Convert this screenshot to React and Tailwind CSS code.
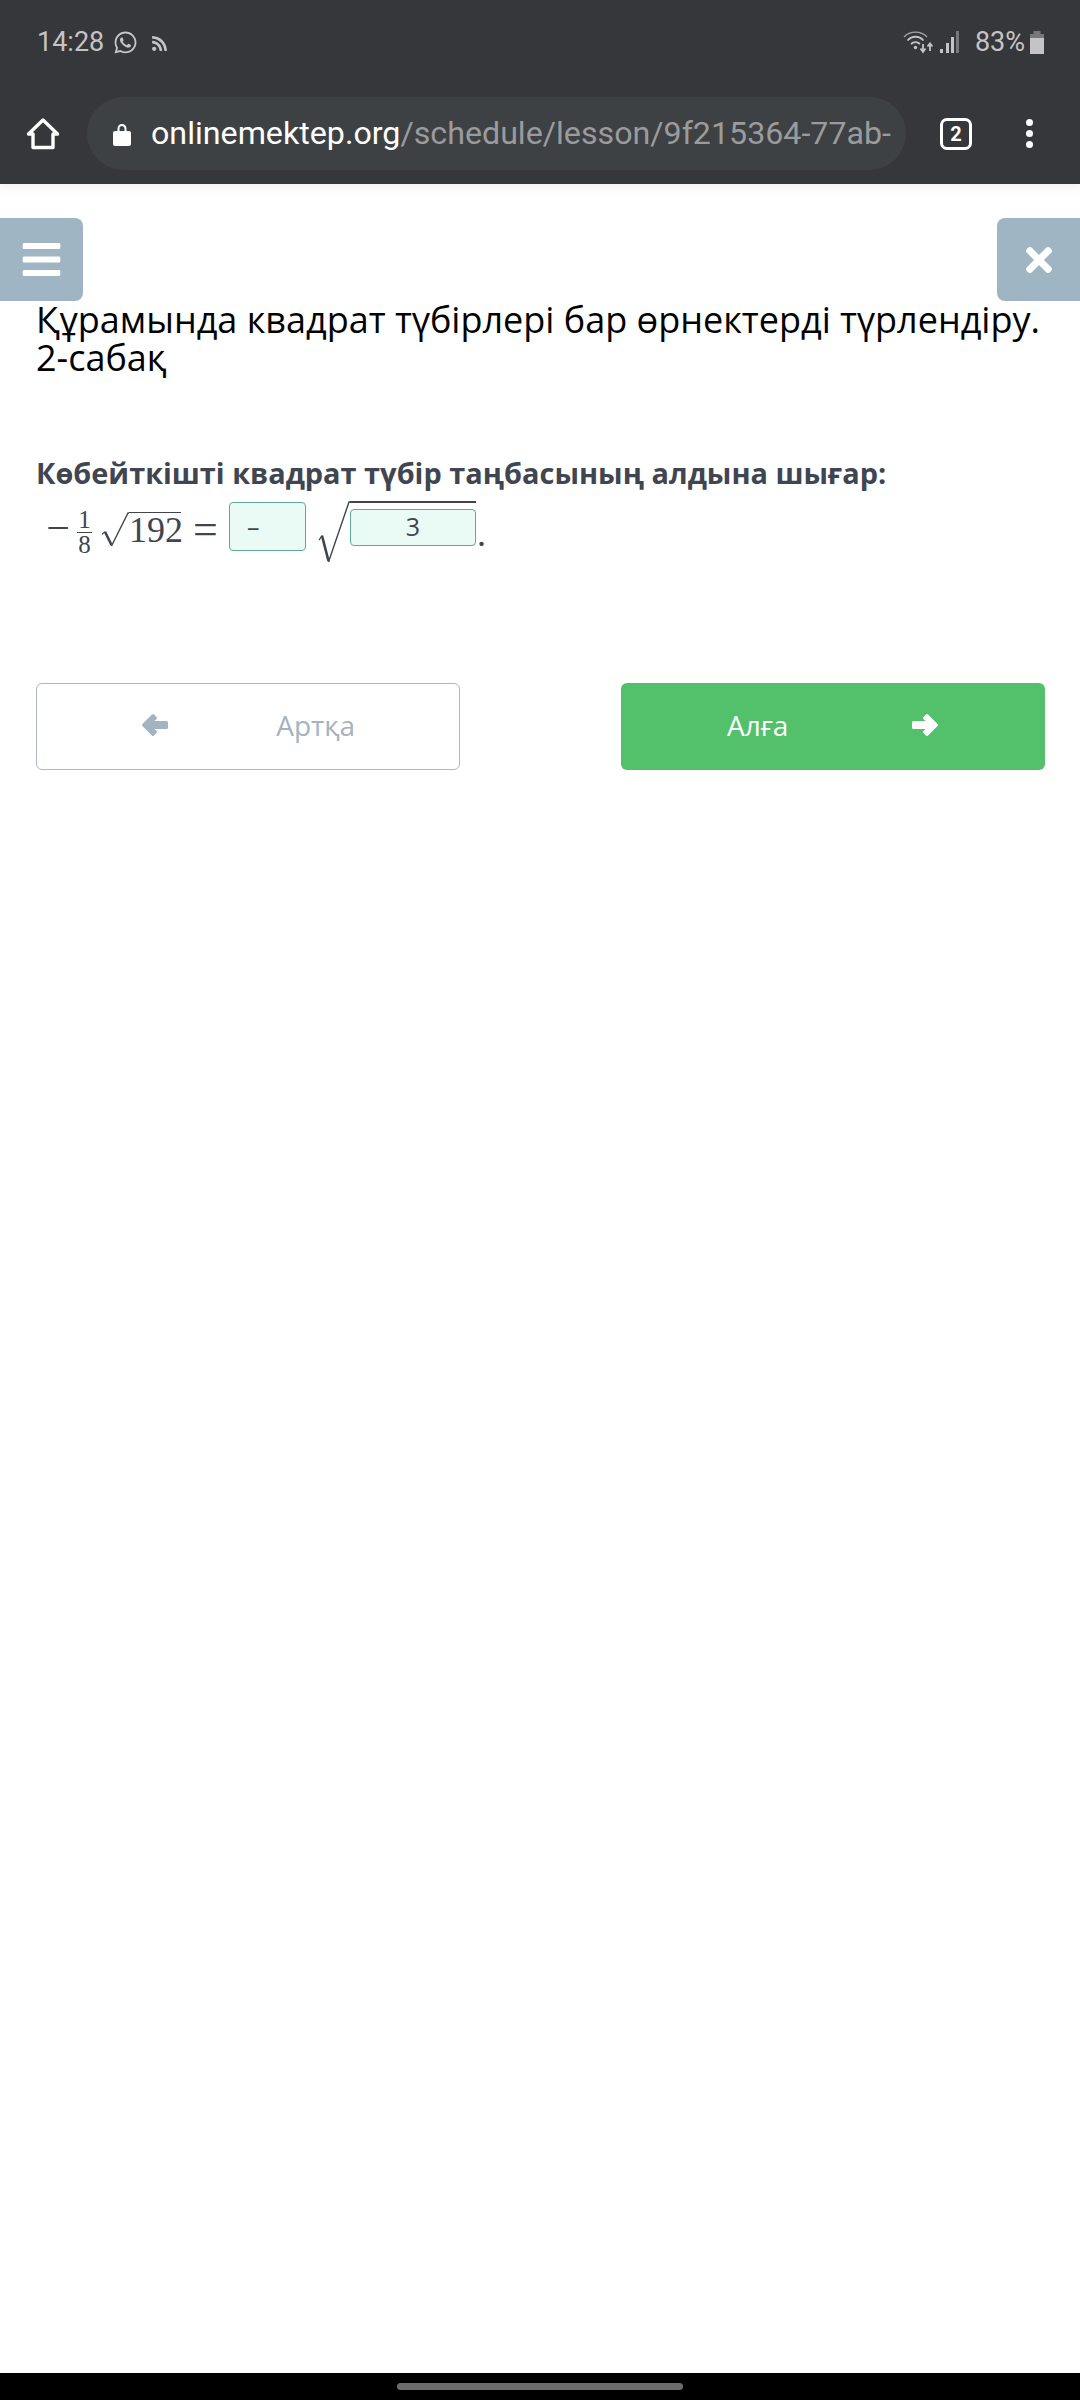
import React from 'react';
import { FaBars, FaTimes, FaWhatsapp, FaRss } from 'react-icons/fa';

const HomeIcon = () => (
    <svg width="34" height="34" viewBox="0 0 34 34" fill="none" stroke="white" strokeWidth="3.4" strokeLinejoin="round">
        <path d="M2.5 17 L17 3 L31.5 17 H27 V30.5 H7 V17 Z" />
    </svg>
);

const LockIcon = () => (
    <svg width="18" height="24" viewBox="0 0 18 24" fill="white">
        <path d="M4.5 9 V6.5 a4.5 4.5 0 0 1 9 0 V9 h-2 V6.5 a2.5 2.5 0 0 0 -5 0 V9 Z" />
        <rect x="0" y="9" width="18" height="15" rx="2" />
    </svg>
);

const WifiIcon = () => (
    <svg width="30" height="24" viewBox="0 0 30 24" fill="none" stroke="#c4c4c6" strokeWidth="1.8">
        <path d="M1 7 C7 0.5 18 0.5 24 7" strokeWidth="1.3" stroke="#a5a5a7" />
        <path d="M4.5 10.5 C9 5.5 16 5.5 20.5 10.5" />
        <path d="M8 14 C10.5 11.5 14.5 11.5 17 14" />
        <circle cx="12.5" cy="17.5" r="1.7" fill="#c4c4c6" stroke="none" />
        <path d="M20 14 V21 M17.5 18.5 L20 22 L22.5 18.5" />
        <path d="M27 21 V14 M24.5 16.5 L27 13.5 L29.5 16.5" />
    </svg>
);

const SignalIcon = () => (
    <svg width="20" height="22" viewBox="0 0 20 22" fill="#c4c4c6">
        <rect x="0" y="18" width="3" height="4" />
        <rect x="6" y="12" width="3" height="10" />
        <rect x="11" y="6" width="3" height="16" />
        <rect x="16" y="0" width="3" height="22" fill="#77787b" />
    </svg>
);

const BatteryIcon = () => (
    <svg width="14" height="23" viewBox="0 0 14 23" fill="#c4c4c6">
        <rect x="3.5" y="0" width="7" height="3" fill="#77787b" />
        <rect x="0" y="3" width="14" height="4" fill="#77787b" />
        <rect x="0" y="7" width="14" height="16" />
    </svg>
);

// chunky arrow, points left unless flipped
const ChunkyArrow = ({ className }) => (
    <svg width="28" height="26" viewBox="0 0 28 26" fill="currentColor" stroke="currentColor" strokeWidth="3" strokeLinejoin="round" className={className}>
        <path d="M2.5 13 L12 3.5 L14.5 6 L9 10.5 H25.5 V15.5 H9 L14.5 20 L12 22.5 Z" />
    </svg>
);

const Radical = ({ width, height, className }) => (
    <svg width={width} height={height} viewBox={`0 0 ${width} ${height}`} fill="none" stroke="#3f4652" className={`shrink-0 ${className || ''}`}>
        <path d={`M1 ${height * 0.62} L4 ${height * 0.55}`} strokeWidth="1.2" />
        <path d={`M4 ${height * 0.55} L10.5 ${height - 3}`} strokeWidth="2.6" />
        <path d={`M10.5 ${height - 2} L${width - 1} 1 H${width}`} strokeWidth="1.4" />
    </svg>
);

const AnswerBox = ({ className, children }) => (
    <div className={`flex items-center border border-[#5fa99a] bg-[#eafaf5] rounded-[4px] text-[#3f4652] text-[25px] leading-none font-['Open_Sans',sans-serif] ${className}`}>
        {children}
    </div>
);

const App = () => {
    return (
        <div className="relative w-[1080px] h-[2400px] bg-white overflow-hidden flex flex-col font-['Open_Sans',sans-serif]">
            {/* Status bar */}
            <div className="bg-[#36373b] h-[184px] shrink-0 shadow-[0_4px_10px_rgba(0,0,0,0.06)] flex flex-col font-['Roboto',sans-serif]">
                <div className="h-[97px] flex justify-between pl-[37px] pr-[36px] pt-[24px] text-[#c4c4c6] text-[27px] leading-[36px]">
                    <div className="flex items-center h-[36px]">
                        <span>14:28</span>
                        <FaWhatsapp className="ml-[9px] text-[25px]" />
                        <FaRss className="ml-[13px] text-[17px] mt-[3px]" />
                    </div>
                    <div className="flex items-center h-[36px]">
                        <WifiIcon />
                        <div className="ml-[7px]"><SignalIcon /></div>
                        <span className="ml-[15px]">83%</span>
                        <div className="ml-[5px]"><BatteryIcon /></div>
                    </div>
                </div>
                <div className="flex items-center h-[73px]">
                    <div className="w-[87px] pr-[2px] flex justify-center shrink-0"><HomeIcon /></div>
                    <div className="w-[819px] h-[73px] rounded-full bg-[#3e4144] flex items-center pl-[26px] overflow-hidden shrink-0">
                        <LockIcon />
                        <span className="ml-[20px] text-[32.2px] leading-none whitespace-nowrap text-white">
                            onlinemektep.org<span className="text-[#9a9b9d]">/schedule/lesson/9f215364-77ab-</span>
                        </span>
                    </div>
                    <div className="ml-[34px] w-[32px] h-[32px] border-[3px] border-white rounded-[7px] flex items-center justify-center text-white text-[20px] font-bold leading-none shrink-0">2</div>
                    <div className="ml-[54px] flex flex-col gap-[4px] shrink-0">
                        <span className="w-[7px] h-[7px] rounded-full bg-white"></span>
                        <span className="w-[7px] h-[7px] rounded-full bg-white"></span>
                        <span className="w-[7px] h-[7px] rounded-full bg-white"></span>
                    </div>
                </div>
            </div>

            {/* Overlay side buttons */}
            <button className="absolute left-0 top-[218px] w-[83px] h-[83px] bg-[#9fb5c3] rounded-r-[8px] flex items-center justify-center text-white text-[43px]">
                <FaBars />
            </button>
            <button className="absolute right-0 top-[218px] w-[83px] h-[83px] bg-[#9fb5c3] rounded-l-[8px] flex items-center justify-center text-white text-[38px]">
                <FaTimes />
            </button>

            {/* Lesson */}
            <div className="flex-1 pl-[36px] pr-[35px] pt-[117px]">
                <h1 className="text-[36px] leading-[38px] text-black font-normal">
                    Құрамында квадрат түбірлері бар өрнектерді түрлендіру. 2-сабақ
                </h1>

                <p className="mt-[77px] text-[28.9px] leading-[38px] font-bold text-[#3f4652]">
                    Көбейткішті квадрат түбір таңбасының алдына шығар:
                </p>

                <div className="flex items-center h-[72px] pl-[10px] font-['Liberation_Serif',serif] text-[#3f4652] text-[36px] leading-none">
                    <span className="w-[24px] text-[42px] text-center">−</span>
                    <div className="ml-[7px] flex flex-col items-center text-[25px] leading-[24px] w-[15px] mt-[8px]">
                        <span className="border-b border-[#3f4652] w-full text-center">1</span>
                        <span>8</span>
                    </div>
                    <div className="ml-[9px] flex items-start mt-[3px]">
                        <Radical width={28} height={36} />
                        <span className="w-[52px] border-t-[1.5px] border-[#3f4652] leading-[34px] text-center">192</span>
                    </div>
                    <span className="ml-[12px] w-[25px] text-[44px] text-center mt-[3px]">=</span>
                    <AnswerBox className="ml-[11px] w-[77px] h-[49px] pl-[17px] -mt-[3px] shrink-0">–</AnswerBox>
                    <div className="ml-[12px] flex items-start mt-[8px]">
                        <Radical width={32} height={63} />
                        <div className="border-t-[2px] border-[#3f4652] w-[126px] pt-[6px]">
                            <AnswerBox className="w-full h-[37px] justify-center pb-[2px]">3</AnswerBox>
                        </div>
                    </div>
                    <span className="ml-[1px] mt-[12px]">.</span>
                </div>

                <div className="mt-[119px] flex justify-between">
                    <button className="w-[424px] h-[87px] border border-[#a9b8c2] rounded-[6px] flex items-center justify-between pl-[104px] pr-[104px] pb-[3px] text-[#a2b4c1] text-[28px]">
                        <ChunkyArrow />
                        <span>Артқа</span>
                    </button>
                    <button className="w-[424px] h-[87px] bg-[#53c16c] rounded-[6px] flex items-center justify-between px-[106px] pb-[3px] text-white text-[28px]">
                        <span>Алға</span>
                        <ChunkyArrow className="rotate-180" />
                    </button>
                </div>
            </div>

            {/* Nav bar */}
            <div className="h-[27px] bg-black shrink-0 flex justify-center items-center">
                <div className="w-[286px] h-[7px] rounded-full bg-[#6b6b6b]"></div>
            </div>
        </div>
    );
};

export default App;
